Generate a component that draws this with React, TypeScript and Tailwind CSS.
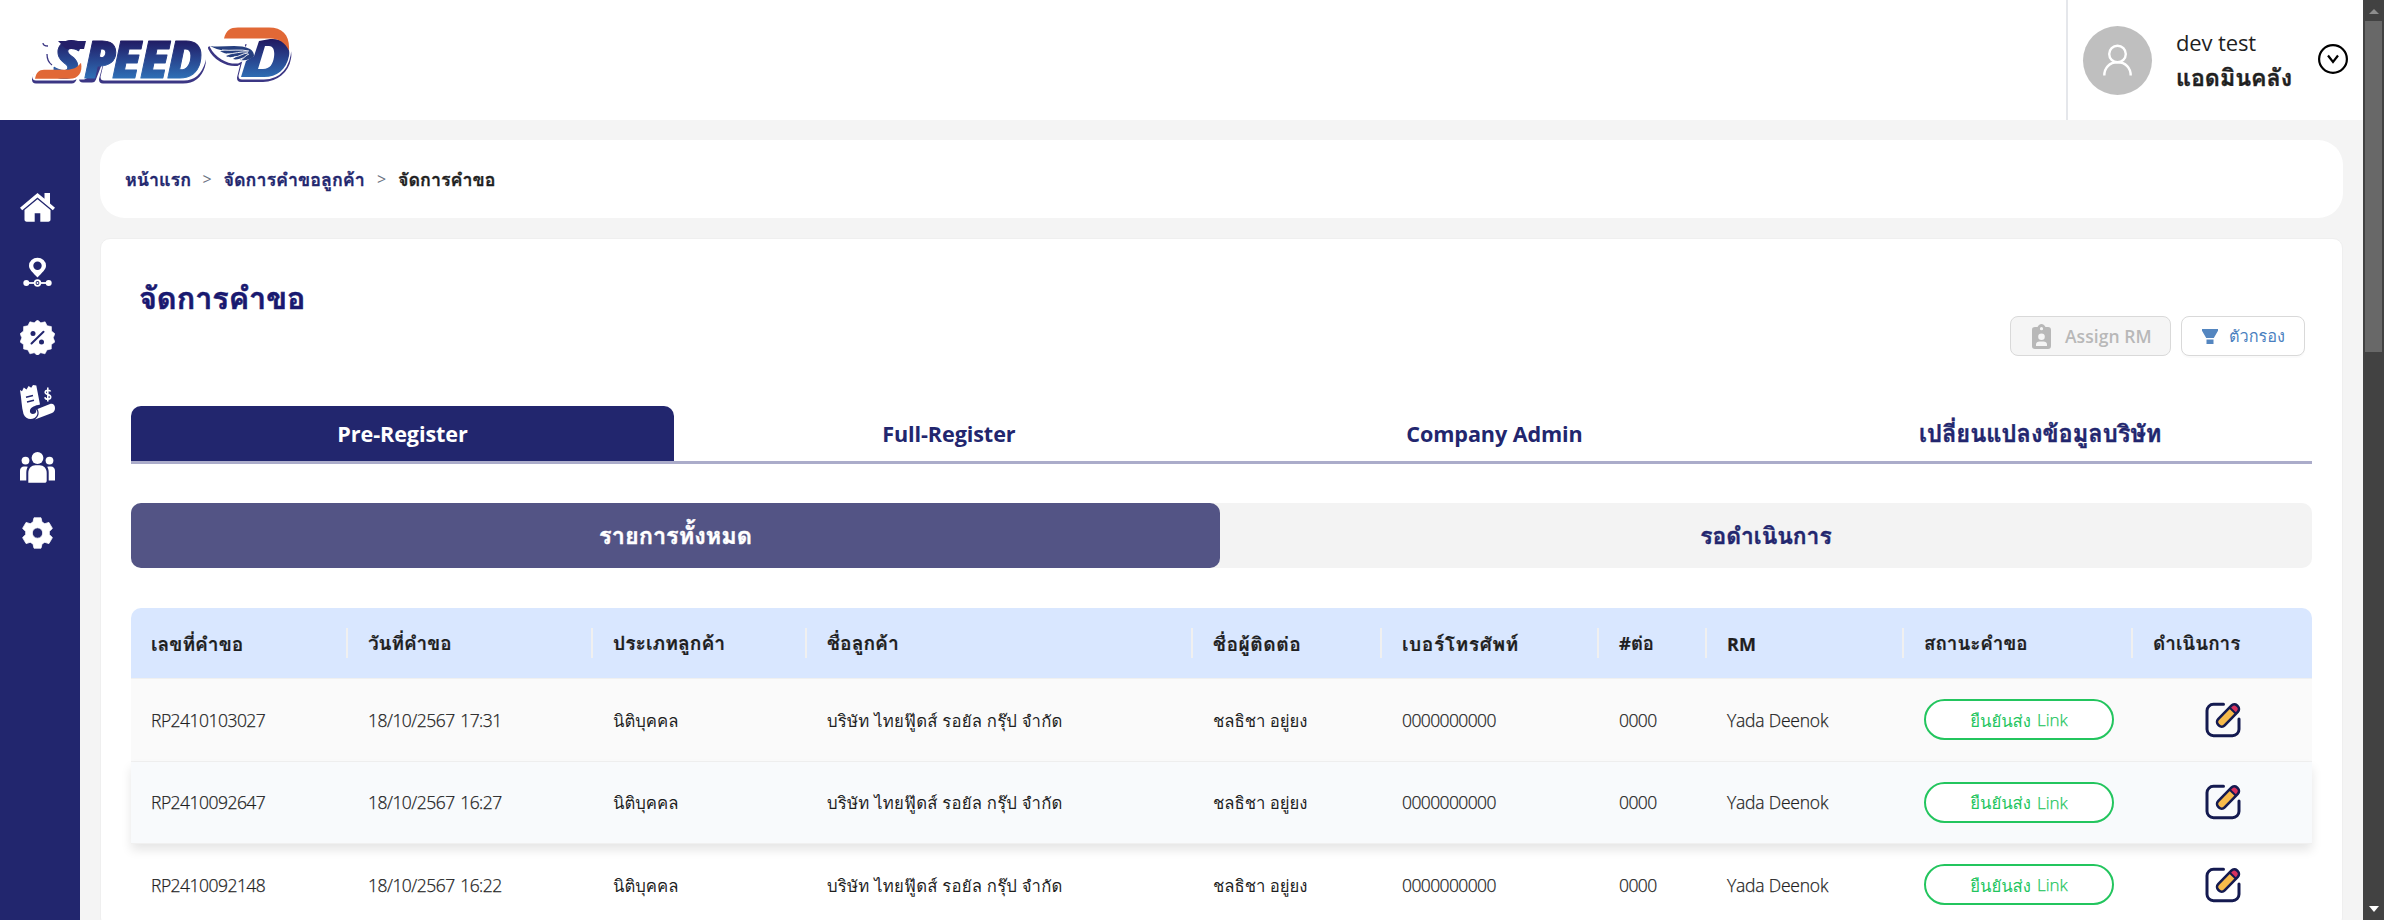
import React from "react";

function Logo() {
  return (
    <svg width="270" height="74" viewBox="24 16 270 74" className="block">
      <defs>
        <linearGradient id="navy" gradientUnits="userSpaceOnUse" x1="0" y1="40" x2="0" y2="78">
          <stop offset="0" stopColor="#211a62" />
          <stop offset="0.45" stopColor="#27408a" />
          <stop offset="1" stopColor="#2f6fb5" />
        </linearGradient>
      </defs>
      <g strokeLinejoin="round">
        <g fill="#3b3684" stroke="#3b3684" strokeWidth="8" transform="translate(-1 2)">
          <path d="M104 77.500L112 48h76c12 0 17 8 14 16-3 9-9 13.500-18 13.500z" />
          <path d="M37 77.500c1-5 4-7 8-7h32l-4 7z" />
          <path d="M84 76.500l8-18h8l-7 18z" />
          <path d="M242 76l9-36h20c12 0 19 7 17 16-2 12-12 20-24 20z" />
          <path d="M211 46h24c8 0 16 3 17 9l-14 7c-11 1-22-6-27-16z" strokeWidth="4" />
        </g>
        <g fill="#fff" stroke="#fff" strokeWidth="7">
          <path d="M104 77L112 44h76c12 0 17 8 14 17-3 10-9 16-18 16z" />
          <path d="M36 77c1-5 4-7 8-7h32l-3 7z" />
          <path d="M84 76L92 44H58l-4 20h24l-2 12z" />
          <path d="M242 76l9-35-26-2c2-8 6-11 14-11h30c14 0 20 8 19 20-1 18-10 28-24 28z" />
          <path d="M211 46h24c8 0 16 3 17 9l-14 7c-11 1-22-6-27-16z" strokeWidth="3" />
        </g>
        <text
          x="53 84 112 140 167"
          y="77.500"
          fontFamily="'Open Sans', 'Liberation Sans', sans-serif"
          fontWeight="800"
          fontStyle="italic"
          fontSize="52"
          fill="url(#navy)"
          stroke="url(#navy)"
          strokeWidth="1"
        >
          SPEED
        </text>
      </g>
      <path d="M58 41h28l-2 8H66z" fill="#241f69" />
      <path d="M35 78.700c1-6 4-9 9-9h22c7 0 11-2 15-7 2 10-3 16-11 16z" fill="#e16836" />
      <path
        d="M241 77l5-16 8-5 5-15 11-2c13-1 21 6 19 17-3 14-12 21-25 21zM258 69h5c7 0 10-5 11-12s-1-11-5-11h-4z"
        fill="url(#navy)"
        fillRule="evenodd"
      />
      <path d="M224 38.500c2-8 6-11 14-11h31c14 0 21 8 20 23-4-8-10-12-19-12z" fill="#e16836" />
      <path d="M210 46c13 2 28-3 40 3 3 2 4 4 4 7-4 4-9 5-14 4 2-1 3-2 4-3-4 2-8 3-11 2l4-3c-4 1-8 2-11 0l5-2c-5 0-8-1-11-3h5c-6-1-11-3-15-5z" fill="#27407f" />
      <path d="M222 50c9 1 19-1 27 1M227 54c7 0 14-3 21-2M234 57c5 0 9-4 14-4M241 60c3-2 5-5 8-6" stroke="#fff" strokeWidth="0.900" fill="none" />
      <path d="M43 43c0 3 3 3 5 3M47 54c0 5 2 9 5 11" stroke="#3b3684" strokeWidth="1.300" fill="none" />
    </svg>
  );
}

const HomeIcon = () => (
  <svg width="35" height="35" viewBox="0 0 35 35" fill="#fff">
    <path d="M17.500 3 0 17.800l2.200 2.500L17.500 7.500l15.300 12.800L35 17.800l-5-4.300V3h-5.500v5.800z" />
    <path d="M17.500 9.300 4.500 20v9.500c0 1.400.8 2.200 2.200 2.200h8v-8.400h5.600v8.400h8c1.400 0 2.200-.8 2.200-2.200V20z" />
  </svg>
);
const PinIcon = () => (
  <svg width="35" height="35" viewBox="0 0 35 35">
    <path d="M17.500 22.500C13 17.500 9 14.500 9 10.700a8.500 8 0 0 1 17 0c0 3.800-4 6.800-8.500 11.800zm0-7.600a4.200 4.200 0 1 0 0-8.400 4.200 4.200 0 0 0 0 8.400z" fill="#fff" fillRule="evenodd" />
    <path d="M6 28h23" stroke="#fff" strokeWidth="1.800" />
    <circle cx="6.300" cy="28" r="3" fill="#fff" />
    <circle cx="28.700" cy="28" r="3" fill="#fff" />
    <circle cx="17.500" cy="28" r="2.800" fill="#22266e" stroke="#fff" strokeWidth="1.800" />
    <circle cx="17.500" cy="28" r="1" fill="#fff" />
  </svg>
);
const PercentIcon = () => (
  <svg width="35" height="35" viewBox="0 0 35 35">
    <path
      d="M17.500 0l3.300 2.800 4.300-1 2 3.900 4.300.9.100 4.400 3.400 2.800-1.700 4 1.700 4.100-3.500 2.700-.1 4.400-4.300.9-2 3.900-4.300-1-3.200 2.700-3.300-2.700-4.300 1-2-3.900-4.300-.9-.1-4.400L.1 21.900l1.700-4.100-1.700-4 3.400-2.800.1-4.400 4.300-.9 2-3.900 4.300 1z"
      fill="#fff"
      stroke="#fff"
      strokeLinejoin="round"
      strokeWidth="0.600"
    />
    <path d="M11.500 23.500l12-11.700" stroke="#22266e" strokeWidth="2" strokeLinecap="round" />
    <circle cx="13" cy="13.500" r="2.500" fill="#22266e" />
    <circle cx="21.500" cy="22" r="2.500" fill="#22266e" />
  </svg>
);
const ReceiptIcon = () => (
  <svg width="35" height="35" viewBox="0 0 35 35">
    <path d="M0 5l2 1.300 1.800-3.800 2.700 2L8.600 1l2.600 1.800L13 0l3.300.5L20 19.500c-5 1-9 2.500-10 5.500-.6 2.500 1 4 3 4 3 0 4-3 2.500-5 3 2 2.500 7-1 9-4 2-9 1-11-4C1.500 22 1.500 13 0 5z" fill="#fff" />
    <path d="M6 12.300l7-1.800M7 17l7-1.800" stroke="#22266e" strokeWidth="1.500" />
    <path d="M15 34.500c4-3 4.500-7 2.500-10.500L30 19c3-1 5 1 5 4 0 2.500-1 4-3 5z" fill="#fff" />
    <path d="M30.500 6.500c-.5-1.800-5.300-1.800-5.300.8 0 3 5.500 1.500 5.500 4.700 0 2.800-5.300 2.800-5.900.2M27.800 2.500v14" stroke="#fff" strokeWidth="1.600" fill="none" />
  </svg>
);
const PeopleIcon = () => (
  <svg width="35" height="35" viewBox="0 0 35 35" fill="#fff">
    <circle cx="17.500" cy="8" r="5.900" />
    <circle cx="5.500" cy="10.600" r="3.900" />
    <circle cx="29.500" cy="10.600" r="3.900" />
    <path d="M8.300 32.800V23c0-4.700 3.200-7.700 7-7.700h4.400c3.800 0 7 3 7 7.700v7.500c0 1.500-.8 2.300-2.300 2.300z" />
    <path d="M7.800 16.700c-1 1.700-1.500 3.600-1.500 6v7.800H0v-9.700c0-2.500 1.700-4.300 4-4.300 1.500 0 2.700 0 3.800.2zM27.200 16.700c1 1.700 1.500 3.600 1.500 6v7.800H35v-9.700c0-2.500-1.700-4.300-4-4.300-1.500 0-2.700 0-3.800.2z" />
  </svg>
);
const GearIcon = () => (
  <svg width="35" height="35" viewBox="0 0 35 35">
    <path
      d="M14 2.800h7l1 4.300 2.800 1.600 4.100-1.300 3.500 6-3.100 3v3.200l3.100 3-3.500 6-4.100-1.300L22 28.900l-1 4.300h-7l-1-4.300-2.800-1.600-4.100 1.300-3.500-6 3.100-3v-3.200l-3.100-3 3.500-6 4.100 1.300L13 7.100zM17.500 23.200a5.200 5.200 0 1 0 0-10.400 5.200 5.200 0 0 0 0 10.400z"
      fill="#fff"
      fillRule="evenodd"
      stroke="#fff"
      strokeLinejoin="round"
      strokeWidth="0.800"
    />
  </svg>
);

const EditIcon = () => (
  <svg width="36" height="36" viewBox="0 0 36 36" fill="none">
    <path d="M18.500 2.300H8.500A6.500 6.500 0 0 0 2 8.800v18.400a6.500 6.500 0 0 0 6.500 6.500h19a6.500 6.500 0 0 0 6.500-6.500V17" stroke="#141a50" strokeWidth="3" strokeLinecap="round" />
    <g transform="rotate(-46 23 13.500)">
      <rect x="9.500" y="9" width="27" height="9" rx="4" fill="#f8bb4b" />
      <path d="M30 9h3.500c2 0 3 1.200 3 3v3c0 1.800-1 3-3 3H30z" fill="#d8325e" />
      <path d="M29.800 9v9" stroke="#141a50" strokeWidth="2" />
      <rect x="9.500" y="9" width="27" height="9" rx="4" stroke="#141a50" strokeWidth="2.600" />
    </g>
  </svg>
);

const columns = [
  { label: "เลขที่คำขอ", cls: "text-[19.200px]" },
  { label: "วันที่คำขอ", cls: "text-[18.900px]" },
  { label: "ประเภทลูกค้า", cls: "text-[19.300px]" },
  { label: "ชื่อลูกค้า", cls: "text-[19.300px]" },
  { label: "ชื่อผู้ติดต่อ", cls: "text-[19.200px] tracking-[0.5px]" },
  { label: "เบอร์โทรศัพท์", cls: "text-[19.200px] tracking-[0.55px]" },
  { label: "#ต่อ", cls: "text-[18.400px]" },
  { label: "RM", cls: "text-[18px]" },
  { label: "สถานะคำขอ", cls: "text-[18.800px]" },
  { label: "ดำเนินการ", cls: "text-[18.900px]" },
];

const rows = [
  { id: "RP2410103027", date: "18/10/2567 17:31", cls: "bg-[#fafafa]" },
  { id: "RP2410092647", date: "18/10/2567 16:27", cls: "bg-[#f8fafc] relative shadow-[0_6px_10px_rgba(0,0,0,0.1)]" },
  { id: "RP2410092148", date: "18/10/2567 16:22", cls: "bg-white" },
];

const grid = "grid grid-cols-[217px_245px_214px_386px_189px_217px_108px_197px_229px_179px]";
const thin = "text-[17.500px] font-light [-webkit-text-stroke:0.25px]";

export default function App() {
  return (
    <div className="flex h-[920px] w-[2384px] overflow-hidden bg-[#f4f4f4] text-[#1f1f1f] [font-family:'Open_Sans','Loma','Noto_Sans',sans-serif]">
      <div className="flex min-w-0 flex-1 flex-col">
        <header className="flex h-[120px] shrink-0 items-start justify-between bg-white">
          <div className="pt-4 pl-6">
            <Logo />
          </div>
          <div className="flex h-full w-[297px] items-center border-l-2 border-[#e5e7eb] pl-[15px]">
            <div className="flex size-[69px] items-center justify-center rounded-full bg-[#bfbfbf]">
              <svg width="32" height="34" viewBox="0 0 32 34" fill="none" stroke="#fff" strokeWidth="2.400">
                <circle cx="15.500" cy="11" r="8.300" />
                <path d="M2.300 32.500c0-7.500 5-13.200 13.200-13.200s13.200 5.700 13.200 13.200" />
              </svg>
            </div>
            <div className="ml-[24px] w-[142px] whitespace-nowrap text-[22px] leading-[35px]">
              <div className="tracking-[-0.13px]">dev test</div>
              <div className="text-[23.200px] font-semibold [-webkit-text-stroke:0.4px]">แอดมินคลัง</div>
            </div>
            <svg width="30" height="30" viewBox="0 0 30 30" fill="none" stroke="#000" strokeWidth="2.200" className="mb-0.5">
              <circle cx="15" cy="15" r="13.900" />
              <path d="M10 11.500l5 6.500 5-6.500" />
            </svg>
          </div>
        </header>

        <div className="flex min-h-0 flex-1">
          <nav className="flex w-20 shrink-0 flex-col gap-[30px] bg-[#22266e] pt-[70px] pl-5">
            <HomeIcon />
            <PinIcon />
            <PercentIcon />
            <ReceiptIcon />
            <PeopleIcon />
            <GearIcon />
          </nav>

          <main className="flex min-w-0 flex-1 flex-col px-5 pt-5">
            <div className="flex h-[78px] shrink-0 items-center rounded-[25px] bg-white pl-[25px] text-[17.900px] font-semibold whitespace-nowrap text-[#22266e]">
              <span className="w-[77.500px] [-webkit-text-stroke:0.3px]">หน้าแรก</span>
              <span className="w-[21px] text-base font-normal text-gray-500">&gt;</span>
              <span className="w-[153.500px] [-webkit-text-stroke:0.3px]">จัดการคำขอลูกค้า</span>
              <span className="w-[21px] text-base font-normal text-gray-500">&gt;</span>
              <span className="text-[#1f1f1f] [-webkit-text-stroke:0.3px]">จัดการคำขอ</span>
            </div>

            <section className="mt-5 flex h-[800px] flex-col rounded-[10px] border border-[#efefef] bg-white px-[30px]">
              <h1 className="mt-9 pl-[8px] text-[30.500px] leading-[44px] font-semibold text-[#191970] [-webkit-text-stroke:0.6px]">จัดการคำขอ</h1>
              <div className="-mt-[3px] flex justify-end gap-2.5 pr-[7px]">
                <button className="flex h-10 w-[161px] items-center rounded-lg border border-[#d9d9d9] bg-[#f5f5f5] pl-[21px] text-[17.500px] font-semibold tracking-[0.05px] whitespace-nowrap text-[#b8b8b8]">
                  <svg width="19" height="25" viewBox="0 0 19 25" className="mr-3.5 shrink-0">
                    <path
                      d="M3 3h2.500C6.500 1 8 0 9.500 0s3 1 4 3H16c2 0 3 1 3 3v16c0 2-1 3-3 3H3c-2 0-3-1-3-3V6c0-2 1-3 3-3zM9.500 6.300a1.600 1.600 0 1 0 0-3.200 1.600 1.600 0 0 0 0 3.200zM9.500 16a3.300 3.300 0 1 0 0-6.600 3.300 3.300 0 0 0 0 6.600zM4 22h11v-1.500c0-2-1.500-3-3.500-3h-4c-2 0-3.500 1-3.500 3z"
                      fill="#b8b8b8"
                      fillRule="evenodd"
                    />
                  </svg>
                  Assign RM
                </button>
                <button className="flex h-10 w-[124px] items-center rounded-lg border border-[#d9d9d9] bg-white pl-5 text-[16.300px] whitespace-nowrap text-[#4a7fc0] shadow-[0_2px_0_rgba(0,0,0,0.02)]">
                  <svg width="16" height="15" viewBox="0 0 16 15" className="mr-[11px] shrink-0" fill="#5486c0">
                    <path d="M0 0h16v1.800L11.800 9H4.200L0 1.800zM4.500 10.500h7V15h-7z" />
                  </svg>
                  ตัวกรอง
                </button>
              </div>

              <div className="mt-[50px] flex h-[58px] shrink-0 border-b-[3px] border-[#abacca] text-center text-[21.600px] leading-[55px] font-bold text-[#22266e]">
                <div className="mr-[3px] w-[543px] rounded-t-[10px] bg-[#22266e] tracking-[-0.1px] text-white">Pre-Register</div>
                <div className="mr-[2px] flex-1 tracking-[-0.1px]">Full-Register</div>
                <div className="mr-[2px] flex-1 tracking-[-0.1px]">Company Admin</div>
                <div className="flex-1 text-[23.600px] [-webkit-text-stroke:0.4px]">เปลี่ยนแปลงข้อมูลบริษัท</div>
              </div>

              <div className="mt-[39px] flex h-[65px] shrink-0 rounded-[10px] bg-[#f3f3f3] text-center text-[23.500px] leading-[65px] font-semibold text-[#22266e] [-webkit-text-stroke:0.4px]">
                <div className="w-[1089px] rounded-[10px] bg-[#535485] text-white">รายการทั้งหมด</div>
                <div className="flex-1 text-[22.800px]">รอดำเนินการ</div>
              </div>

              <div className="mt-10">
                <div className={`${grid} h-[71px] rounded-t-[10px] border-b border-[#f0f0f0] bg-[#d9e7ff] text-lg font-bold whitespace-nowrap`}>
                  {columns.map((c, i) => (
                    <div key={c.label} className="flex items-center">
                      <span className={`flex-1 pt-px pl-5 [-webkit-text-stroke:0.2px] ${c.cls}`}>{c.label}</span>
                      {i < columns.length - 1 && <span className="h-[30px] w-[2px] bg-[#f0f0f0]" />}
                    </div>
                  ))}
                </div>
                {rows.map((r) => (
                  <div
                    key={r.id}
                    className={`${grid} h-[82.500px] items-center border-b border-[#f0f0f0] text-[16.700px] whitespace-nowrap *:pl-5 ${r.cls}`}
                  >
                    <div className={`${thin} tracking-[-0.52px]`}>{r.id}</div>
                    <div className={`${thin} tracking-[-0.52px] [word-spacing:1.500px]`}>{r.date}</div>
                    <div className="pt-px">นิติบุคคล</div>
                    <div className="pt-px tracking-[0.25px]">บริษัท ไทยฟู๊ดส์ รอยัล กรุ๊ป จำกัด</div>
                    <div className="pt-px">ชลธิชา อยู่ยง</div>
                    <div className={`${thin} tracking-[-0.6px]`}>0000000000</div>
                    <div className={`${thin} tracking-[-0.6px]`}>0000</div>
                    <div className={`${thin} tracking-[-0.2px]`}>Yada Deenok</div>
                    <div>
                      <div className="flex h-[41px] w-[190px] items-center justify-center gap-1.5 rounded-full border-2 border-[#23c55e] bg-white text-[#23c55e]">
                        <span className="pt-px">ยืนยันส่ง</span>
                        <span className="text-[17px] font-light [-webkit-text-stroke:0.25px]">Link</span>
                      </div>
                    </div>
                    <div className="flex">
                      <span className="ml-[52px]">
                        <EditIcon />
                      </span>
                    </div>
                  </div>
                ))}
              </div>
            </section>
          </main>
        </div>
      </div>

      <div className="flex w-[21px] shrink-0 flex-col items-center justify-between bg-[#424242] pt-[9px] pb-2">
        <div className="flex flex-col items-center gap-[7px]">
          <svg width="10" height="5" viewBox="0 0 10 5">
            <path d="M5 0l5 5H0z" fill="#8d8d8d" />
          </svg>
          <div className="h-[331px] w-[17px] bg-[#686868]" />
        </div>
        <svg width="10" height="6" viewBox="0 0 10 6">
          <path d="M0 0h10L5 6z" fill="#fff" />
        </svg>
      </div>
    </div>
  );
}
